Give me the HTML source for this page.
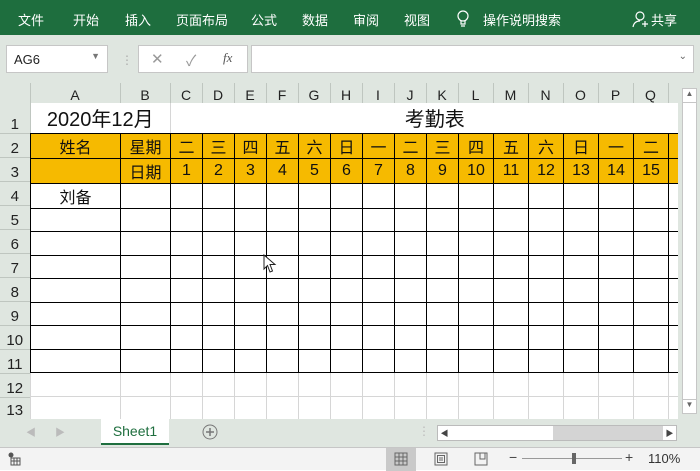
<!DOCTYPE html>
<html><head><meta charset="utf-8"><style>
*{margin:0;padding:0;box-sizing:border-box}
body{width:700px;height:470px;overflow:hidden;background:#fff;font-family:"Liberation Sans","Noto Sans CJK SC",sans-serif;position:relative}
.abs{position:absolute}
#rib{left:0;top:0;width:700px;height:35px;background:#1e6e3e;color:#fff;font-size:13px}
#rib span{position:absolute;top:10px}
#fb{left:0;top:35px;width:700px;height:48px;background:#dfe6e0}
.box{position:absolute;background:#fff;border:1px solid #c6c6c6}
table{border-collapse:collapse;table-layout:fixed;position:absolute}
td{padding:0;text-align:center;vertical-align:middle;overflow:hidden;white-space:nowrap}
#ch{left:0;top:83px}
#ch td{height:20px;background:#dfe6e0;border-right:1px solid #bfc6c0;border-bottom:1px solid #bfc6c0;font-size:14px;color:#222;vertical-align:bottom}
#rh{left:0;top:103px;width:30px}
#rh td{background:#dfe6e0;border-bottom:1px solid #bfc6c0;border-right:1px solid #bfc6c0;font-size:15px;color:#222;vertical-align:bottom;width:30px}
#g{left:30px;top:103px}
#g td{border:1px solid #000;font-size:16px;color:#111;height:23.5px}
#g tr.r1 td{border:none;border-bottom:1px solid #000;background:#fff;font-size:20px;height:30px}
#g tr.y td{background:#f6ba00}
#g tr.l td{border-color:#d6d6d6}
#vs{left:678px;top:83px;width:22px;height:336px;background:#dfe6e0}
#tab{left:0;top:419px;width:700px;height:28px;background:#dfe6e0}
#st{left:0;top:447px;width:700px;height:23px;background:#f3f3f3;border-top:1px solid #c6c6c6}
</style></head><body>
<div id="rib" class="abs">
<span style="left:18px">文件</span><span style="left:73px">开始</span><span style="left:125px">插入</span><span style="left:176px">页面布局</span><span style="left:251px">公式</span><span style="left:302px">数据</span><span style="left:353px">审阅</span><span style="left:404px">视图</span>
<svg class="abs" style="left:456px;top:10px" width="14" height="18"><circle cx="7" cy="6" r="5" fill="none" stroke="#fff" stroke-width="1.2"/><path d="M5 11v3h4v-3M5 16h4" stroke="#fff" fill="none" stroke-width="1.2"/></svg>
<span style="left:483px">操作说明搜索</span>
<svg class="abs" style="left:632px;top:10px" width="16" height="18"><circle cx="8" cy="6" r="4" fill="none" stroke="#fff" stroke-width="1.2"/><path d="M1 17c1-5 4-6 7-6M10 14h6M13 11v6" stroke="#fff" fill="none" stroke-width="1.2"/></svg>
<span style="left:651px">共享</span>
</div>
<div id="fb" class="abs">
<div class="box" style="left:6px;top:10px;width:102px;height:28px;font-size:13px;padding:6px 0 0 7px;color:#222">AG6<span style="position:absolute;right:7px;top:5px;font-size:9px;color:#777">▼</span></div>
<div class="abs" style="left:121px;top:18px;color:#aaa;font-size:12px">⋮</div>
<div class="box" style="left:138px;top:10px;width:110px;height:28px;color:#999;font-size:15px"><span class="abs" style="left:12px;top:4px">✕</span><span class="abs" style="left:47px;top:4px">✓</span><span class="abs" style="left:84px;top:4px;font-family:'Liberation Serif',serif;font-style:italic;font-size:13px;color:#555">fx</span></div>
<div class="box" style="left:251px;top:10px;width:443px;height:28px"><span class="abs" style="right:6px;top:5px;font-size:10px;color:#666">⌄</span></div>
</div>
<svg class="abs" style="left:12px;top:88px" width="16" height="14"><path d="M15 1L15 13L1 13Z" fill="#b5b5b5"/></svg>
<table id="ch"><tr>
<td style="width:30px;border-right:1px solid #bfc6c0"></td>
<td style="width:90px">A</td><td style="width:50px">B</td><td style="width:32px">C</td><td style="width:32px">D</td><td style="width:32px">E</td><td style="width:32px">F</td><td style="width:32px">G</td><td style="width:32px">H</td><td style="width:32px">I</td><td style="width:32px">J</td><td style="width:32px">K</td><td style="width:35px">L</td><td style="width:35px">M</td><td style="width:35px">N</td><td style="width:35px">O</td><td style="width:35px">P</td><td style="width:35px">Q</td><td style="width:10px"></td>
</tr></table>
<table id="rh">
<tr><td style="height:30px">1</td></tr><tr><td style="height:24px">2</td></tr><tr><td style="height:24px">3</td></tr>
<tr><td style="height:24px">4</td></tr><tr><td style="height:24px">5</td></tr><tr><td style="height:24px">6</td></tr><tr><td style="height:24px">7</td></tr><tr><td style="height:24px">8</td></tr><tr><td style="height:24px">9</td></tr><tr><td style="height:24px">10</td></tr><tr><td style="height:24px">11</td></tr><tr><td style="height:24px">12</td></tr><tr><td style="height:22px">13</td></tr>
</table>
<table id="g">
<colgroup><col style="width:90px"><col style="width:50px"><col style="width:32px"><col style="width:32px"><col style="width:32px"><col style="width:32px"><col style="width:32px"><col style="width:32px"><col style="width:32px"><col style="width:32px"><col style="width:32px"><col style="width:35px"><col style="width:35px"><col style="width:35px"><col style="width:35px"><col style="width:35px"><col style="width:35px"><col style="width:10px"></colgroup>
<tr class="r1"><td colspan="2" style="border-right:1px solid #d6d6d6">2020年12月</td><td colspan="15" style="padding-left:30px">考勤表</td><td></td></tr>
<tr class="y"><td>姓名</td><td>星期</td><td>二</td><td>三</td><td>四</td><td>五</td><td>六</td><td>日</td><td>一</td><td>二</td><td>三</td><td>四</td><td>五</td><td>六</td><td>日</td><td>一</td><td>二</td><td></td></tr>
<tr class="y"><td></td><td>日期</td><td>1</td><td>2</td><td>3</td><td>4</td><td>5</td><td>6</td><td>7</td><td>8</td><td>9</td><td>10</td><td>11</td><td>12</td><td>13</td><td>14</td><td>15</td><td></td></tr>
<tr><td style="vertical-align:top">刘备</td><td></td><td></td><td></td><td></td><td></td><td></td><td></td><td></td><td></td><td></td><td></td><td></td><td></td><td></td><td></td><td></td><td></td></tr>
<tr><td></td><td></td><td></td><td></td><td></td><td></td><td></td><td></td><td></td><td></td><td></td><td></td><td></td><td></td><td></td><td></td><td></td><td></td></tr>
<tr><td></td><td></td><td></td><td></td><td></td><td></td><td></td><td></td><td></td><td></td><td></td><td></td><td></td><td></td><td></td><td></td><td></td><td></td></tr>
<tr><td></td><td></td><td></td><td></td><td></td><td></td><td></td><td></td><td></td><td></td><td></td><td></td><td></td><td></td><td></td><td></td><td></td><td></td></tr>
<tr><td></td><td></td><td></td><td></td><td></td><td></td><td></td><td></td><td></td><td></td><td></td><td></td><td></td><td></td><td></td><td></td><td></td><td></td></tr>
<tr><td></td><td></td><td></td><td></td><td></td><td></td><td></td><td></td><td></td><td></td><td></td><td></td><td></td><td></td><td></td><td></td><td></td><td></td></tr>
<tr><td></td><td></td><td></td><td></td><td></td><td></td><td></td><td></td><td></td><td></td><td></td><td></td><td></td><td></td><td></td><td></td><td></td><td></td></tr>
<tr><td></td><td></td><td></td><td></td><td></td><td></td><td></td><td></td><td></td><td></td><td></td><td></td><td></td><td></td><td></td><td></td><td></td><td></td></tr>
<tr class="l"><td style="border-top-color:#000"></td><td style="border-top-color:#000"></td><td style="border-top-color:#000"></td><td style="border-top-color:#000"></td><td style="border-top-color:#000"></td><td style="border-top-color:#000"></td><td style="border-top-color:#000"></td><td style="border-top-color:#000"></td><td style="border-top-color:#000"></td><td style="border-top-color:#000"></td><td style="border-top-color:#000"></td><td style="border-top-color:#000"></td><td style="border-top-color:#000"></td><td style="border-top-color:#000"></td><td style="border-top-color:#000"></td><td style="border-top-color:#000"></td><td style="border-top-color:#000"></td><td style="border-top-color:#000"></td></tr>
<tr class="l"><td style="height:22px"></td><td></td><td></td><td></td><td></td><td></td><td></td><td></td><td></td><td></td><td></td><td></td><td></td><td></td><td></td><td></td><td></td><td></td></tr>
</table>
<svg class="abs" style="left:263px;top:254px" width="14" height="20"><path d="M1 1L1 15L4.5 11.5L7 18L9.5 17L7 10.5L12 10.5Z" fill="#fff" stroke="#222" stroke-width="1"/></svg>
<div id="vs" class="abs"><div class="abs" style="left:4px;top:5px;width:15px;height:326px;background:#fff;border:1px solid #c6c6c6"></div><div class="abs" style="left:5px;top:6px;width:13px;height:14px;border-bottom:1px solid #c6c6c6;font-size:8px;text-align:center;color:#666">▲</div><div class="abs" style="left:5px;top:316px;width:13px;height:14px;border-top:1px solid #c6c6c6;font-size:8px;text-align:center;color:#666">▼</div></div>
<div id="tab" class="abs">
<span class="abs" style="left:26px;top:5px;color:#bbb;font-size:10px">◀</span><span class="abs" style="left:55px;top:5px;color:#bbb;font-size:10px">▶</span>
<div class="abs" style="left:101px;top:0;width:68px;height:26px;background:#fff;border-bottom:2px solid #1e6e3e;color:#1e6e3e;font-size:14px;text-align:center;padding-top:4px">Sheet1</div>
<svg class="abs" style="left:202px;top:5px" width="16" height="16"><circle cx="8" cy="8" r="7" fill="none" stroke="#777"/><path d="M8 4v8M4 8h8" stroke="#777" stroke-width="1.5"/></svg>
<span class="abs" style="left:418px;top:5px;color:#bbb;font-size:12px">⋮</span>
<div class="abs" style="left:437px;top:6px;width:240px;height:16px;background:#d4d4d4;border:1px solid #bbb"></div>
<div class="abs" style="left:451px;top:7px;width:102px;height:14px;background:#fff"></div>
<div class="abs" style="left:438px;top:7px;width:13px;height:14px;background:#fff;font-size:8px;color:#444;text-align:center;padding-top:2px">◀</div>
<div class="abs" style="left:663px;top:7px;width:13px;height:14px;background:#fff;font-size:8px;color:#444;text-align:center;padding-top:2px">▶</div>
</div>
<div id="st" class="abs">
<svg class="abs" style="left:7px;top:4px" width="14" height="14"><circle cx="4" cy="3" r="2.5" fill="#555"/><rect x="4" y="6" width="9" height="7" fill="none" stroke="#555"/><path d="M4 9h9M7 6v7M10 6v7" stroke="#555"/></svg>
<div class="abs" style="left:386px;top:0;width:30px;height:23px;background:#c9c9c9"></div>
<svg class="abs" style="left:394px;top:4px" width="14" height="14"><rect x="1" y="1" width="12" height="12" fill="none" stroke="#666"/><path d="M5 1v12M9 1v12M1 5h12M1 9h12" stroke="#666"/></svg>
<svg class="abs" style="left:434px;top:4px" width="14" height="14"><rect x="1" y="1" width="12" height="12" fill="none" stroke="#666"/><rect x="3.5" y="3.5" width="7" height="7" fill="none" stroke="#666"/><path d="M5 6h4M5 8h4" stroke="#666"/></svg>
<svg class="abs" style="left:474px;top:4px" width="14" height="14"><path d="M1 1h12v12H1zM6 1v6h5V1" fill="none" stroke="#666"/></svg>
<span class="abs" style="left:509px;top:1px;font-size:14px;color:#444">−</span>
<div class="abs" style="left:522px;top:10px;width:100px;height:1px;background:#999"></div>
<div class="abs" style="left:572px;top:5px;width:4px;height:11px;background:#666"></div>
<span class="abs" style="left:625px;top:1px;font-size:14px;color:#444">+</span>
<span class="abs" style="left:648px;top:3px;font-size:13px;color:#333">110%</span>
</div>
</body></html>
